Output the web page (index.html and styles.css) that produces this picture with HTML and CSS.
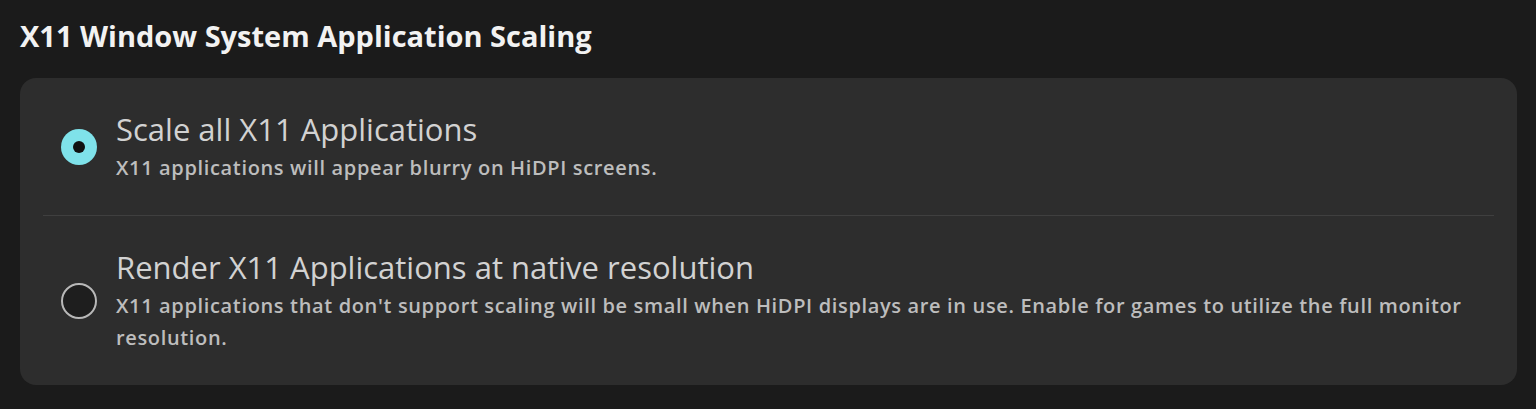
FILE: index.html
```html
<!DOCTYPE html>
<html>
<head>
<meta charset="utf-8">
<link rel="stylesheet" href="styles.css">
</head>
<body>
<div class="page">
  <h1 class="title">X11 Window System Application Scaling</h1>
  <div class="card">
    <div class="row">
      <span class="radio radio-on"><span class="dot"></span></span>
      <div class="text">
        <div class="label">Scale all X11 Applications</div>
        <div class="desc">X11 applications will appear blurry on HiDPI screens.</div>
      </div>
    </div>
    <div class="row">
      <span class="radio radio-off"></span>
      <div class="text">
        <div class="label">Render X11 Applications at native resolution</div>
        <div class="desc">X11 applications that don't support scaling will be small when HiDPI displays are in use. Enable for games to utilize the full monitor resolution.</div>
      </div>
    </div>
  </div>
</div>
</body>
</html>
```

FILE: styles.css
```css
html, body {
  margin: 0;
  padding: 0;
  background: #1b1b1b;
}
.page {
  padding: 14px 19px 0 20px;
  font-family: "Open Sans", "Noto Sans", sans-serif;
}
.title {
  margin: 0;
  font-size: 29px;
  line-height: 44px;
  font-weight: 700;
  color: #f2f2f2;
}
.card {
  margin-top: 20px;
  background: #2d2d2d;
  border-radius: 16px;
  padding: 0 23px;
}
.row {
  display: flex;
  align-items: center;
  gap: 19px;
  padding: 31px 18px;
}
.row + .row {
  border-top: 1px solid #3f3f3f;
}
.radio {
  flex: none;
  width: 36px;
  height: 36px;
  border-radius: 50%;
  box-sizing: border-box;
  display: flex;
  align-items: center;
  justify-content: center;
}
.radio-on {
  background: #7fe2ea;
}
.dot {
  width: 12px;
  height: 12px;
  border-radius: 50%;
  background: #111;
}
.radio-off {
  width: 36px;
  height: 36px;
  border: 2px solid #b8b8b8;
  background: #1e1e1e;
}
.text {
  flex: 1;
  min-width: 0;
}
.label {
  font-size: 31px;
  line-height: 40px;
  color: #d2d2d2;
}
.desc {
  margin-top: 3px;
  font-size: 20px;
  line-height: 32px;
  font-weight: 600;
  letter-spacing: 0.65px;
  color: #bdbdbd;
}
```
